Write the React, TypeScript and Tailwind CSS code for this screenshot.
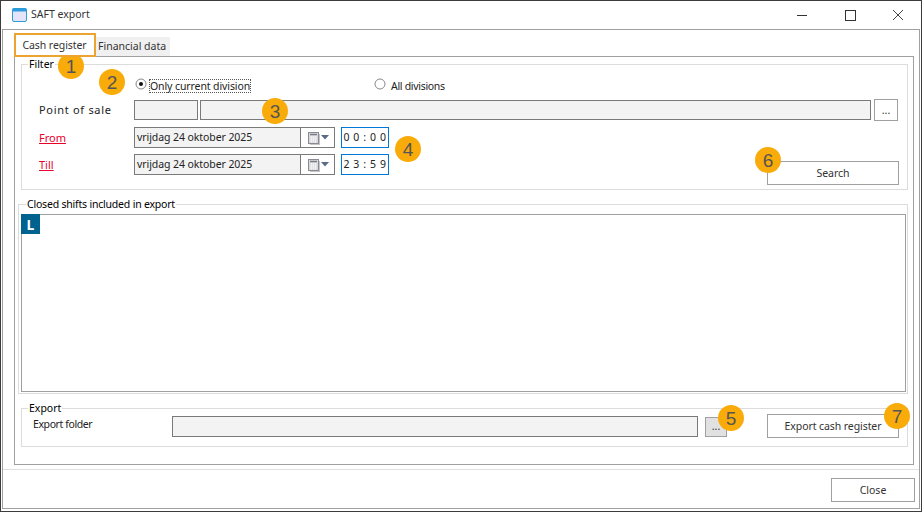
import type { ReactNode } from 'react';

const Badge = ({ n, className }: { n: number; className: string }) => (
  <div
    className={`absolute flex h-[26px] w-[26px] items-center justify-center rounded-full bg-[#f9ab0a] font-['Liberation_Sans',sans-serif] text-[19px] leading-none text-[#555] ${className}`}
  >
    {n}
  </div>
);

const Legend = ({ children, className }: { children: ReactNode; className: string }) => (
  <span className={`absolute bg-white px-px leading-[14px] text-black ${className}`}>{children}</span>
);

const CalendarIcon = () => (
  <svg width="33" height="14" viewBox="0 0 33 14">
    <rect x="9" y="3" width="10" height="11" fill="#c4c4c8" />
    <rect x="7.5" y="1.5" width="10" height="11" fill="#d8d8de" stroke="#8b8b93" />
    <path d="M9 3.5h7" stroke="#7b7b83" strokeWidth="1.4" />
    <path d="M9 6h7M9 8h7M9 10h7M10.5 5v7M12.5 5v7M14.5 5v7" stroke="#f4f4f4" strokeWidth="0.8" />
    <path d="M20 4h8l-4 4.5z" fill="#5a6b86" />
  </svg>
);

const DateRow = ({ label, time, className }: { label: string; time: [string, string]; className: string }) => (
  <div className={`flex items-start ${className}`}>
    <a href="#" className="w-[112px] pt-[3px] pl-[17px] text-[11px] leading-[16px] text-[#e8002d] underline">
      {label}
    </a>
    <div className="flex h-[21px] w-[201px] border border-[#7a7a7a]">
      <div className="flex-1 bg-[#f3f3f3] pt-px pl-[2px] leading-[17px] tracking-[-0.08px] text-[#222]">
        vrijdag 24 oktober 2025
      </div>
      <div className="flex w-[34px] items-center border-l border-[#7a7a7a] bg-white">
        <CalendarIcon />
      </div>
    </div>
    <div className="ml-[6px] flex h-[21px] w-[48px] items-center justify-center border border-[#0078d7] tracking-[0.6px] whitespace-pre text-[#222]">
      {time[0]} :{time[1]}
    </div>
  </div>
);

const Button = ({ children, className }: { children: ReactNode; className: string }) => (
  <button className={`flex items-center justify-center border border-[#a0a0a0] bg-white pt-px text-[#333] ${className}`}>
    {children}
  </button>
);

export default function App() {
  return (
    <div className="relative flex h-[512px] w-[922px] flex-col overflow-hidden border border-[#3c3c3c] bg-white px-px pb-[2px] font-['Noto_Sans',sans-serif] text-[10.5px]">
      {/* Title bar */}
      <div className="flex h-[28px] shrink-0 items-center">
        <svg width="16" height="16" viewBox="0 0 16 16" className="ml-[9px]">
          <rect x="1.5" y="1.5" width="14" height="13" rx="1.5" fill="#e4e4f8" stroke="#2d9bdc" />
          <rect x="1.5" y="1.5" width="14" height="3" fill="#2d9bdc" />
        </svg>
        <span className="ml-[4px] text-[#333]">SAFT export</span>
        <div className="ml-auto flex items-center">
          <svg width="12" height="12" viewBox="0 0 12 12" className="mr-[36px]">
            <path d="M0 6.5h10" stroke="#333" />
          </svg>
          <svg width="12" height="12" viewBox="0 0 12 12" className="mr-[35px]">
            <rect x="0.5" y="1.5" width="10" height="10" fill="none" stroke="#333" />
          </svg>
          <svg width="12" height="12" viewBox="0 0 12 12" className="mr-[16px]">
            <path d="M1 1l10 10M11 1L1 11" stroke="#444" />
          </svg>
        </div>
      </div>

      {/* Inner frame */}
      <div className="flex flex-1 flex-col border border-[#a0a0a0]">
        <div className="flex h-[26px] shrink-0 items-end pl-[11px]">
          <div className="z-10 flex h-[24px] w-[82px] translate-y-[1px] items-center justify-center border-2 border-[#eda32f] bg-white pr-px pt-px tracking-[-0.08px] text-[#333]">
            Cash register
          </div>
          <div className="flex h-[19px] w-[74px] items-center bg-[#f0f0f0] pt-px pl-[2px] text-[#333]">Financial data</div>
        </div>

        <div className="mr-[5px] ml-[11px] flex h-[409px] flex-col border border-[#a0a0a0] pt-[7px] pr-[5px] pl-[6px]">
          {/* Filter */}
          <div className="relative h-[126px] shrink-0 border border-[#dcdcdc] pt-[14px]">
            <Legend className="-top-[8px] left-[6px]">Filter</Legend>
            <div className="flex h-[14px] items-center pl-[113px]">
              <svg width="12" height="12" viewBox="0 0 12 12" className="-translate-y-[2px]">
                <circle cx="6" cy="6" r="5" fill="white" stroke="#888" />
                <circle cx="6" cy="6" r="2" fill="#111" />
              </svg>
              <span className="ml-[2px] w-[102px] border border-dotted border-[#555] leading-[12px] tracking-[-0.1px] whitespace-nowrap text-[#222]">
                Only current division
              </span>
              <svg width="12" height="12" viewBox="0 0 12 12" className="ml-[123px] -translate-y-[2px]">
                <circle cx="6" cy="6" r="5" fill="white" stroke="#888" />
              </svg>
              <span className="ml-[5px] pt-px tracking-[-0.3px] text-[#222]">All divisions</span>
            </div>

            <div className="mt-[6px] flex h-[22px] items-center">
              <span className="w-[112px] pt-px pl-[17px] text-[11px] tracking-[0.7px] text-[#222]">Point of sale</span>
              <div className="h-[20px] w-[64px] border border-[#7a7a7a] bg-[#f3f3f3]" />
              <div className="ml-[2px] h-[20px] w-[671px] border border-[#7a7a7a] bg-[#f3f3f3]" />
              <Button className="ml-[3px] h-[22px] w-[24px]">...</Button>
            </div>

            <div className="mt-[6px] flex items-start justify-between pr-[8px]">
              <div>
                <DateRow label="From" time={['0 0', ' 0 0']} className="" />
                <DateRow label="Till" time={['2 3', ' 5 9']} className="mt-[6px]" />
              </div>
              <Button className="mt-[34px] h-[24px] w-[132px]">Search</Button>
            </div>
          </div>

          {/* Closed shifts */}
          <div className="relative mt-[14px] -ml-[3px] flex h-[190px] shrink-0 flex-col border border-[#dcdcdc] pt-[9px] pr-px pb-px pl-[2px]">
            <Legend className="-top-[8px] left-[7px] tracking-[-0.2px]">Closed shifts included in export</Legend>
            <div className="flex-1 border border-[#a0a0a0] bg-white">
              <div className="-mt-px -ml-px flex h-[20px] w-[19px] items-center justify-center bg-[#00628f] text-[14px] font-bold text-white">
                L
              </div>
            </div>
          </div>

          {/* Export */}
          <div className="relative mt-[14px] flex h-[39px] shrink-0 items-start border border-[#dcdcdc] pt-[5px]">
            <Legend className="-top-[8px] left-[6px]">Export</Legend>
            <span className="w-[150px] pt-[3px] pl-[11px] tracking-[-0.4px] text-[#222]">Export folder</span>
            <div className="mt-[2px] h-[21px] w-[526px] border border-[#7a7a7a] bg-[#f3f3f3]" />
            <button className="mt-[3px] ml-[7px] flex h-[20px] w-[22px] items-center justify-center border border-[#a0a0a0] bg-[#e1e1e1] text-[#333]">
              ...
            </button>
            <Button className="ml-[40px] h-[24px] w-[132px] tracking-[-0.08px]">Export cash register</Button>
          </div>
        </div>

        {/* Footer */}
        <div className="mt-[4px] flex flex-1 items-start justify-end border-t border-[#e0e0e0] pt-[8px] pr-[4px]">
          <Button className="h-[24px] w-[84px]">Close</Button>
        </div>
      </div>

      <Badge n={1} className="top-[52px] left-[57px]" />
      <Badge n={2} className="top-[68px] left-[98px]" />
      <Badge n={3} className="top-[97px] left-[261px]" />
      <Badge n={4} className="top-[135px] left-[394px]" />
      <Badge n={5} className="top-[404px] left-[717px]" />
      <Badge n={6} className="top-[146px] left-[754px]" />
      <Badge n={7} className="top-[402px] left-[883px]" />
    </div>
  );
}
